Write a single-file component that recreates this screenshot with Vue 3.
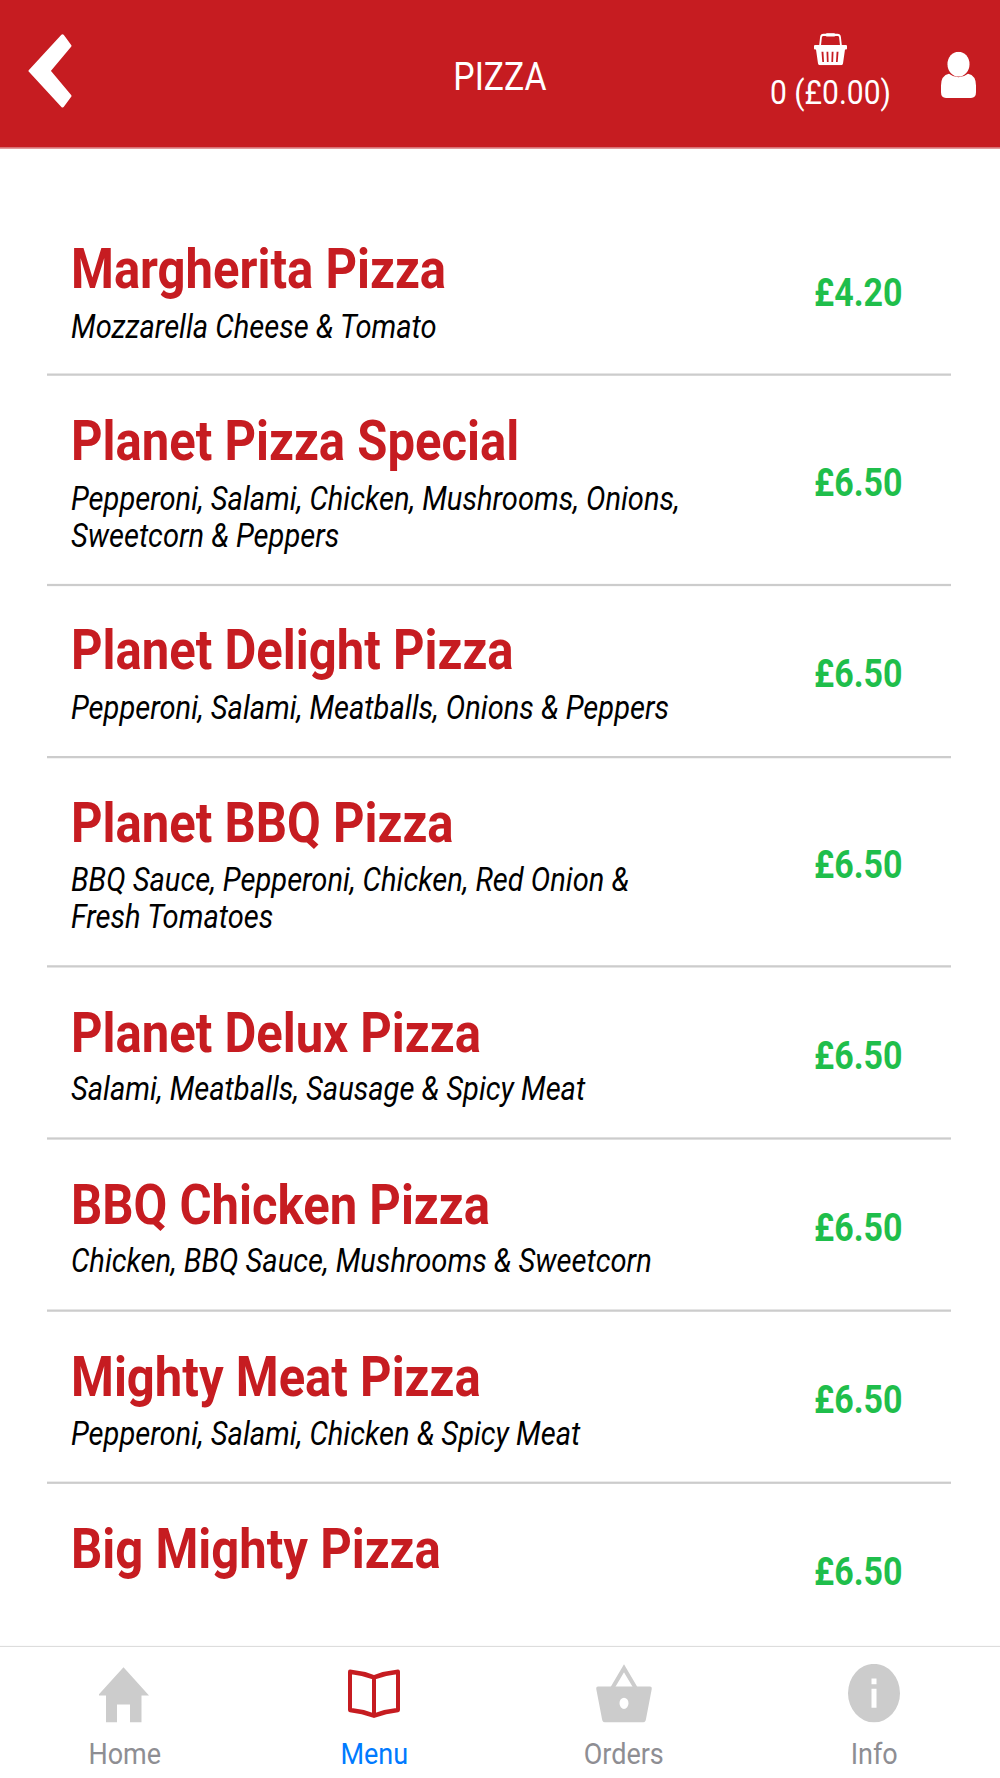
<script setup>
const pizzas = [
  { name: 'Margherita Pizza', desc: 'Mozzarella Cheese & Tomato', price: '£4.20' },
  { name: 'Planet Pizza Special', desc: 'Pepperoni, Salami, Chicken, Mushrooms, Onions, Sweetcorn & Peppers', price: '£6.50' },
  { name: 'Planet Delight Pizza', desc: 'Pepperoni, Salami, Meatballs, Onions & Peppers', price: '£6.50' },
  { name: 'Planet BBQ Pizza', desc: 'BBQ Sauce, Pepperoni, Chicken, Red Onion & Fresh Tomatoes', price: '£6.50' },
  { name: 'Planet Delux Pizza', desc: 'Salami, Meatballs, Sausage & Spicy Meat', price: '£6.50' },
  { name: 'BBQ Chicken Pizza', desc: 'Chicken, BBQ Sauce, Mushrooms & Sweetcorn', price: '£6.50' },
  { name: 'Mighty Meat Pizza', desc: 'Pepperoni, Salami, Chicken & Spicy Meat', price: '£6.50' },
  { name: 'Big Mighty Pizza', desc: '\u00a0', price: '£6.50' },
]
</script>

<template>
  <div class="page">
    <div class="screen">
      <header class="topbar">
        <div class="topbar__left">
          <svg class="back" viewBox="0 0 42 74" preserveAspectRatio="none">
            <path d="M33 2 L40 12 L20 37 L40 62 L33 72 L2 37 Z" fill="#fff" stroke="#fff" stroke-width="3" stroke-linejoin="round" />
          </svg>
        </div>
        <div class="topbar__title">PIZZA</div>
        <div class="topbar__right">
          <div class="cart">
            <svg class="cart__icon" viewBox="0 0 33 29">
              <path d="M6 12 L7 4 Q7.300 2 9.500 2 L23.500 2 Q25.700 2 26 4 L27 12" fill="none" stroke="#fff" stroke-width="1.800" />
              <rect x="11.500" y="0.500" width="10" height="3" rx="1.500" fill="#fff" />
              <path fill-rule="evenodd" fill="#fff" d="M1 11 H32 Q33 11 33 12 V14 Q33 15 32 15 H31 L29 27.500 Q28.800 29 27 29 H6 Q4.200 29 4 27.500 L2 15 H1 Q0 15 0 14 V12 Q0 11 1 11 Z M7.500 17 L8.300 26 H10 L9.400 17 Z M12.500 17 L12.900 26 H14.600 L14.300 17 Z M17.700 17 L17.400 26 H19.100 L19.500 17 Z M22.600 17 L22 26 H23.700 L24.500 17 Z" />
            </svg>
            <div class="cart__text">0 (£0.00)</div>
          </div>
          <svg class="user" viewBox="0 0 35 41">
            <ellipse cx="17.500" cy="11" rx="11" ry="11" fill="#fff" />
            <path d="M8 19.500 Q17.500 26 27 19.500 Q35 21 35 30 V36 Q35 41 30 41 H5 Q0 41 0 36 V30 Q0 21 8 19.500 Z" fill="#fff" />
          </svg>
        </div>
      </header>

      <main class="menu">
        <div v-for="pizza in pizzas" :key="pizza.name" class="item">
          <div class="item__info">
            <div class="item__name">{{ pizza.name }}</div>
            <div class="item__desc">{{ pizza.desc }}</div>
          </div>
          <div class="item__price">{{ pizza.price }}</div>
        </div>
      </main>

      <nav class="tabs">
        <div class="tab">
          <svg class="tab__icon" viewBox="1.500 0 52 52">
            <path fill="#ccc" fill-rule="evenodd" d="M26 3 L51.500 28 H44 V52 H32.500 V36 H19.500 V52 H8.500 V28 H0.500 Z" />
          </svg>
          <span class="tab__label">Home</span>
        </div>
        <div class="tab">
          <svg class="tab__icon" viewBox="0 0 52 52">
            <path fill="none" stroke="#c61c21" stroke-width="4" stroke-linejoin="round" d="M2 7 Q14 8 26 12 Q38 8 50 7 V41 Q38 42 26 46 Q14 42 2 41 Z M26 12 V46" />
          </svg>
          <span class="tab__label tab__label--active">Menu</span>
        </div>
        <div class="tab">
          <svg class="tab__icon tab__icon--wide" viewBox="0 0 56 52">
            <path fill="none" stroke="#ccc" stroke-width="4" d="M16 22 L28 4 L40 22" />
            <path fill="#ccc" fill-rule="evenodd" d="M2 20 H54 Q56 20 55.800 22 L50 49 Q49.500 52 47 52 H9 Q6.500 52 6 49 L0.200 22 Q0 20 2 20 Z M28 30 A4.500 5 0 1 0 28 40 A4.500 5 0 1 0 28 30 Z" />
          </svg>
          <span class="tab__label">Orders</span>
        </div>
        <div class="tab">
          <svg class="tab__icon" viewBox="0 0 52 52">
            <path fill="#ccc" fill-rule="evenodd" d="M26 0 A26 26 0 1 0 26 52 A26 26 0 1 0 26 0 Z M23.500 13 V18 H28.500 V13 Z M23.500 22 V39 H28.500 V22 Z" />
          </svg>
          <span class="tab__label">Info</span>
        </div>
      </nav>
    </div>
  </div>
</template>

<style>
html,
body {
  margin: 0;
  background: #fff;
}
</style>

<style scoped>
.page {
  width: 1000px;
  height: 1778px;
  overflow: hidden;
}

/* the reference is a slightly tall-stretched capture, so everything below is in unstretched px */
.screen {
  width: 1000px;
  height: 1580.4px;
  display: flex;
  flex-direction: column;
  font-family: Roboto, "Liberation Sans", sans-serif;
  background: #fff;
  overflow: hidden;
  transform: scaleY(1.125);
  transform-origin: top left;
}

.topbar {
  flex: none;
  height: 132px;
  box-sizing: border-box;
  display: grid;
  grid-template-columns: 1fr auto 1fr;
  align-items: center;
  padding: 0 24px;
  background: #c61c21;
  border-bottom: 1px solid #e3a5a7;
  color: #fff;
}

.topbar__left {
  display: flex;
  padding-left: 4px;
}

.back {
  width: 44px;
  height: 66px;
  margin-top: -5px;
}

.topbar__title {
  font-size: 33.8px;
  margin-top: 6px;
}

.topbar__right {
  display: flex;
  align-items: center;
  justify-content: flex-end;
  gap: 50px;
}

.cart {
  display: flex;
  flex-direction: column;
  align-items: center;
  gap: 6px;
  margin-top: -2px;
}

.cart__icon {
  width: 33px;
  height: 29px;
}

.cart__text {
  font-size: 30px;
  line-height: 36px;
}

.user {
  width: 35px;
  height: 41px;
  margin-top: 2px;
}

.menu {
  flex: 1;
  min-height: 0;
  overflow: hidden;
  padding: 49.5px 49px 0 47px;
}

.item {
  display: flex;
  align-items: center;
  justify-content: space-between;
  padding: 30.7px 0 25.5px 24px;
  border-bottom: 2px solid #ccc;
}

.item:last-child {
  border-bottom: none;
}

.item__info {
  width: 620px;
}

.item__name {
  font-size: 49px;
  font-weight: 700;
  line-height: 56px;
  color: #c61c21;
  white-space: nowrap;
}

.item__desc {
  margin-top: 5.5px;
  font-size: 29.1px;
  font-style: italic;
  line-height: 33.3px;
  color: #000;
}

.item__price {
  width: 88px;
  margin-right: 49px;
  font-size: 34px;
  font-weight: 700;
  color: #1fbe4b;
  white-space: nowrap;
}

.tabs {
  flex: none;
  height: 117px;
  box-sizing: border-box;
  display: grid;
  grid-template-columns: repeat(3, 249.5px) 1fr;
  border-top: 1px solid #ddd;
  background: #fff;
}

.tab {
  display: flex;
  flex-direction: column;
  align-items: center;
  padding-top: 15px;
}

.tab__icon {
  width: 52px;
  height: 52px;
}

.tab__icon--wide {
  width: 56px;
}

.tab__label {
  margin-top: 10.5px;
  font-size: 27px;
  line-height: 34px;
  color: #8e8e93;
}

.tab__label--active {
  color: #007aff;
}
</style>
